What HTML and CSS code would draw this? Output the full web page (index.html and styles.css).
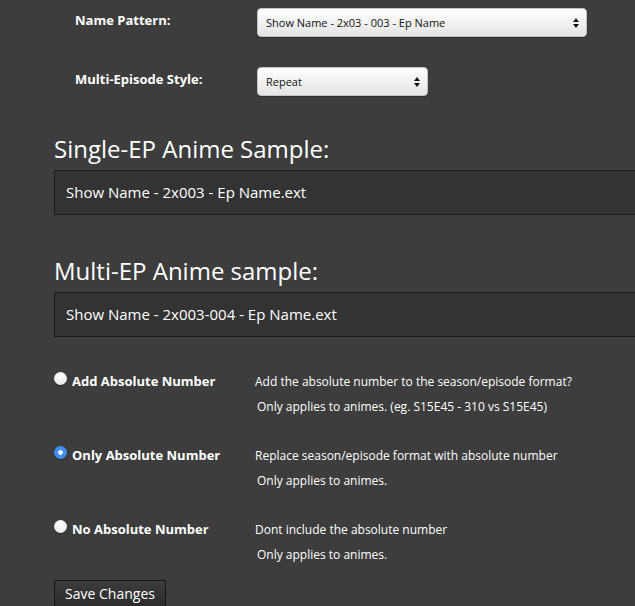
FILE: index.html
```html
<!DOCTYPE html>
<html lang="en">
<head>
    <meta charset="UTF-8">
    <meta name="viewport" content="width=device-width, initial-scale=1.0">
    <title>Episode Naming</title>
    <link rel="stylesheet" href="styles.css">
</head>
<body>
    <form class="naming">
        <div class="pattern-fields">
            <div class="field-row">
                <label class="field-label" for="name-pattern">Name Pattern:</label>
                <div class="select-wrap">
                    <select id="name-pattern" class="select-pattern">
                        <option>Show Name - 2x03 - 003 - Ep Name</option>
                    </select>
                    <svg class="select-arrow" width="6" height="10" viewBox="0 0 6 10"><path d="M3 0L6 4H0z M3 10L0 6H6z" fill="#111"/></svg>
                </div>
            </div>
            <div class="field-row">
                <label class="field-label" for="multi-style">Multi-Episode Style:</label>
                <div class="select-wrap">
                    <select id="multi-style" class="select-style">
                        <option>Repeat</option>
                    </select>
                    <svg class="select-arrow" width="6" height="10" viewBox="0 0 6 10"><path d="M3 0L6 4H0z M3 10L0 6H6z" fill="#111"/></svg>
                </div>
            </div>
        </div>

        <h2 class="sample-title">Single-EP Anime Sample:</h2>
        <div class="sample-box">Show Name - 2x003 - Ep Name.ext</div>

        <h2 class="sample-title second">Multi-EP Anime sample:</h2>
        <div class="sample-box">Show Name - 2x003-004 - Ep Name.ext</div>

        <div class="absolute-options">
            <div class="option-row">
                <label class="option-label"><input type="radio" name="absolute"> Add Absolute Number</label>
                <div class="option-desc">
                    <span>Add the absolute number to the season/episode format?</span>
                    <span class="note">Only applies to animes. (eg. S15E45 - 310 vs S15E45)</span>
                </div>
            </div>
            <div class="option-row">
                <label class="option-label"><input type="radio" name="absolute" checked> Only Absolute Number</label>
                <div class="option-desc">
                    <span>Replace season/episode format with absolute number</span>
                    <span class="note">Only applies to animes.</span>
                </div>
            </div>
            <div class="option-row">
                <label class="option-label"><input type="radio" name="absolute"> No Absolute Number</label>
                <div class="option-desc">
                    <span>Dont include the absolute number</span>
                    <span class="note">Only applies to animes.</span>
                </div>
            </div>
        </div>

        <button type="button" class="save-btn">Save Changes</button>
    </form>
</body>
</html>
```

FILE: styles.css
```css
body {
    font-family: "Open Sans", "DejaVu Sans", sans-serif;
    margin: 0;
    padding: 0;
    background: #3d3d3d;
    color: #fff;
    overflow: hidden;
}

.naming {
    padding: 8px 0 0 54px;
}

.pattern-fields {
    display: flex;
    flex-direction: column;
    gap: 30px;
    margin-left: 21px;
}

.field-row {
    display: flex;
    align-items: flex-start;
}

.field-label {
    width: 182px;
    font-size: 13px;
    font-weight: bold;
    padding-top: 3px;
}

.select-wrap {
    position: relative;
}

.select-wrap select {
    appearance: none;
    -webkit-appearance: none;
    height: 29px;
    padding: 0 24px 0 8px;
    font-family: "Open Sans", sans-serif;
    font-size: 11px;
    color: #111;
    border: 1px solid #c4c4c4;
    border-radius: 4px;
    background: linear-gradient(to bottom, #ffffff, #e4e4e4);
    box-shadow: 0 1px 1px rgba(0, 0, 0, 0.3);
    outline: none;
}

.select-pattern {
    width: 330px;
}

.select-style {
    width: 171px;
}

.select-arrow {
    position: absolute;
    right: 8px;
    top: 10px;
    pointer-events: none;
}

.sample-title {
    font-size: 24px;
    font-weight: normal;
    line-height: 28px;
    margin: 39px 0 7px;
}

.sample-title.second {
    margin-top: 42px;
}

.sample-box {
    width: 620px;
    height: 43px;
    line-height: 43px;
    padding: 0 11px;
    font-size: 15px;
    background: #333333;
    border: 1px solid #1c1c1c;
}

.absolute-options {
    display: flex;
    flex-direction: column;
    gap: 24px;
    margin-top: 32px;
}

.option-row {
    display: flex;
    align-items: flex-start;
}

.option-label {
    width: 201px;
    display: flex;
    align-items: center;
    gap: 5px;
    font-size: 13px;
    font-weight: bold;
    line-height: 24px;
}

.option-label input {
    appearance: none;
    -webkit-appearance: none;
    width: 13px;
    height: 13px;
    margin: -6px 0 0;
    border-radius: 50%;
    background: radial-gradient(circle at 50% 35%, #ffffff, #e2e2e2);
    box-shadow: 0 1px 1px rgba(0, 0, 0, 0.4);
}

.option-label input:checked {
    background: radial-gradient(circle, #ffffff 0 2px, #3f8ff3 2.5px);
}

.option-desc {
    display: flex;
    flex-direction: column;
    font-size: 12px;
    line-height: 25px;
}

.option-desc .note {
    padding-left: 2px;
}

.save-btn {
    margin-top: 13px;
    width: 112px;
    height: 27px;
    padding: 0;
    font-family: "Open Sans", sans-serif;
    font-size: 14px;
    color: #fff;
    border: 1px solid #151515;
    border-radius: 1px;
    background: linear-gradient(to bottom, #3c3c3c, #2c2c2c);
}
```
